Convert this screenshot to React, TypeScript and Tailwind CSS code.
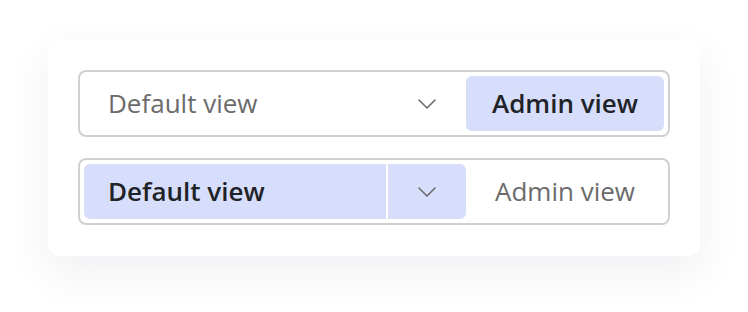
import { useState } from 'react';

type View = 'default' | 'admin';

function Chevron() {
  return (
    <svg width="20" height="12" viewBox="0 0 20 12" fill="none" className="text-[#6b6b6b]">
      <polyline points="2,2 10,10 18,2" stroke="currentColor" strokeWidth="1.6" strokeLinecap="round" strokeLinejoin="round" />
    </svg>
  );
}

function ViewSwitcher({ initial }: { initial: View }) {
  const [view, setView] = useState<View>(initial);
  const isDefault = view === 'default';

  return (
    <div className="flex h-[67px] rounded-lg border-2 border-[#d0d0d0] bg-white p-1">
      {/* Default view + its menu */}
      <button
        onClick={() => setView('default')}
        className={`flex-1 rounded-l-md pl-6 text-left ${
          isDefault ? 'bg-[#d6defb] font-semibold text-[#1f2328]' : 'text-[#6b6b6b]'
        }`}
      >
        Default view
      </button>
      <div className={`w-[2px] ${isDefault ? 'bg-white' : ''}`} />
      <button
        className={`flex w-[78px] items-center justify-center rounded-r-md ${isDefault ? 'bg-[#d6defb]' : ''}`}
      >
        <Chevron />
      </button>

      <button
        onClick={() => setView('admin')}
        className={`w-[198px] rounded-md text-center ${
          !isDefault ? 'bg-[#d6defb] font-semibold text-[#1f2328]' : 'text-[#6b6b6b]'
        }`}
      >
        Admin view
      </button>
    </div>
  );
}

export default function App() {
  return (
    <div className="min-h-[312px] bg-white pl-12 pt-10" style={{ fontFamily: '"Open Sans", "Noto Sans", sans-serif' }}>
      <div className="flex w-[652px] flex-col gap-[21px] rounded-xl bg-white px-[30px] pt-[30px] pb-[31px] text-[26px] shadow-[0_16px_44px_rgba(40,30,70,0.07)]">
        <ViewSwitcher initial="admin" />
        <ViewSwitcher initial="default" />
      </div>
    </div>
  );
}
